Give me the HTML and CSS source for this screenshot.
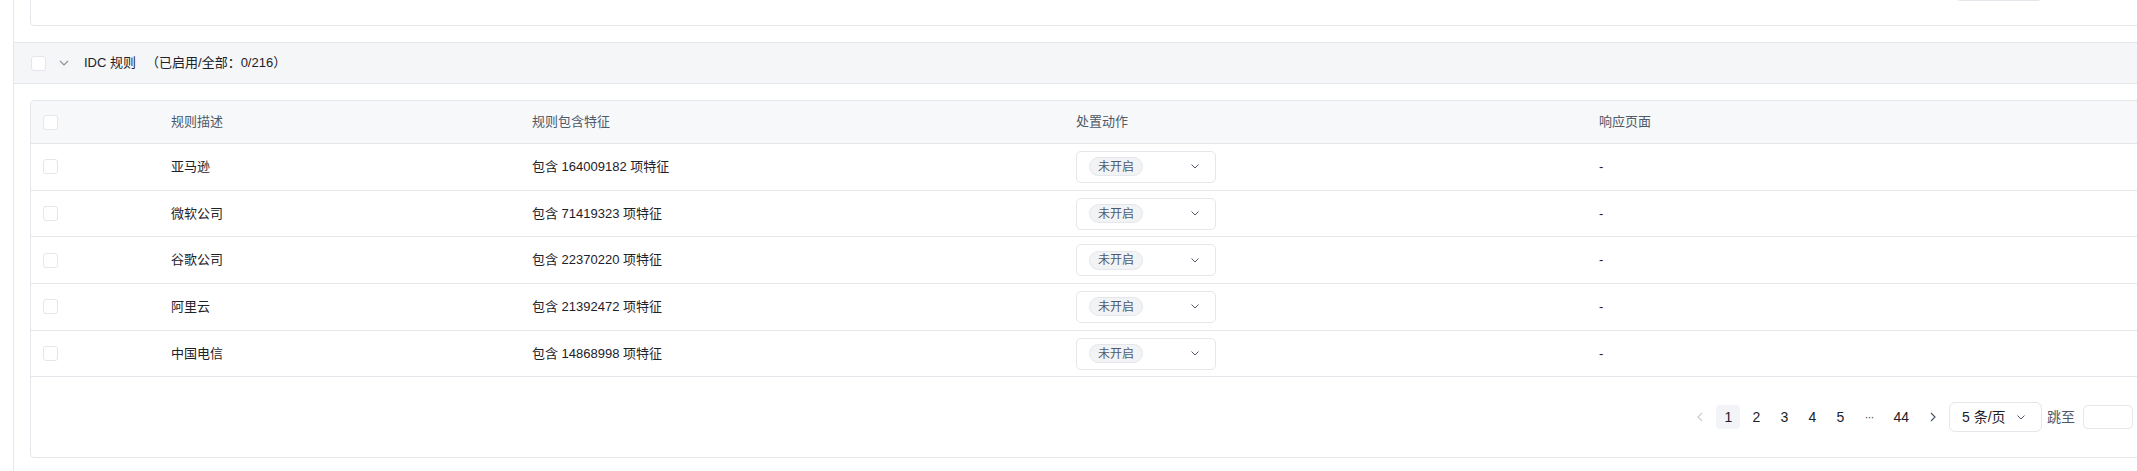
FILE: index.html
```html
<!DOCTYPE html>
<html lang="zh-CN">
<head>
    <meta charset="UTF-8">
    <meta name="viewport" content="width=device-width, initial-scale=1.0">
    <title>IDC 规则</title>
    <link rel="stylesheet" href="styles.css">
</head>
<body>
    <div class="layout">
        <div class="gutter"></div>

        <div class="panel">
            <div class="card top-card">
                <div class="toolbar">
                    <div class="btn"></div>
                </div>
            </div>

            <div class="group-header">
                <span class="checkbox"></span>
                <svg class="group-arrow" width="10" height="6" viewBox="0 0 10 6">
                    <polyline points="1,1 5,5 9,1" fill="none" stroke="#86909c" stroke-width="1.1"/>
                </svg>
                <span class="group-title">IDC 规则</span>
                <span class="group-count">（已启用/全部：0/216）</span>
            </div>

            <div class="card table-card">
                <div class="row head">
                    <div class="cell check"><span class="checkbox"></span></div>
                    <div class="cell">规则描述</div>
                    <div class="cell">规则包含特征</div>
                    <div class="cell">处置动作</div>
                    <div class="cell">响应页面</div>
                </div>

                <div class="row">
                    <div class="cell check"><span class="checkbox"></span></div>
                    <div class="cell">亚马逊</div>
                    <div class="cell">包含 164009182 项特征</div>
                    <div class="cell">
                        <div class="select">
                            <span class="tag">未开启</span>
                            <svg width="8" height="5" viewBox="0 0 8 5"><polyline points="0.5,0.5 4,4 7.5,0.5" fill="none" stroke="#4e5969" stroke-width="1"/></svg>
                        </div>
                    </div>
                    <div class="cell">-</div>
                </div>

                <div class="row">
                    <div class="cell check"><span class="checkbox"></span></div>
                    <div class="cell">微软公司</div>
                    <div class="cell">包含 71419323 项特征</div>
                    <div class="cell">
                        <div class="select">
                            <span class="tag">未开启</span>
                            <svg width="8" height="5" viewBox="0 0 8 5"><polyline points="0.5,0.5 4,4 7.5,0.5" fill="none" stroke="#4e5969" stroke-width="1"/></svg>
                        </div>
                    </div>
                    <div class="cell">-</div>
                </div>

                <div class="row">
                    <div class="cell check"><span class="checkbox"></span></div>
                    <div class="cell">谷歌公司</div>
                    <div class="cell">包含 22370220 项特征</div>
                    <div class="cell">
                        <div class="select">
                            <span class="tag">未开启</span>
                            <svg width="8" height="5" viewBox="0 0 8 5"><polyline points="0.5,0.5 4,4 7.5,0.5" fill="none" stroke="#4e5969" stroke-width="1"/></svg>
                        </div>
                    </div>
                    <div class="cell">-</div>
                </div>

                <div class="row">
                    <div class="cell check"><span class="checkbox"></span></div>
                    <div class="cell">阿里云</div>
                    <div class="cell">包含 21392472 项特征</div>
                    <div class="cell">
                        <div class="select">
                            <span class="tag">未开启</span>
                            <svg width="8" height="5" viewBox="0 0 8 5"><polyline points="0.5,0.5 4,4 7.5,0.5" fill="none" stroke="#4e5969" stroke-width="1"/></svg>
                        </div>
                    </div>
                    <div class="cell">-</div>
                </div>

                <div class="row">
                    <div class="cell check"><span class="checkbox"></span></div>
                    <div class="cell">中国电信</div>
                    <div class="cell">包含 14868998 项特征</div>
                    <div class="cell">
                        <div class="select">
                            <span class="tag">未开启</span>
                            <svg width="8" height="5" viewBox="0 0 8 5"><polyline points="0.5,0.5 4,4 7.5,0.5" fill="none" stroke="#4e5969" stroke-width="1"/></svg>
                        </div>
                    </div>
                    <div class="cell">-</div>
                </div>

                <div class="pagination">
                    <span class="page-item arrow disabled">
                        <svg width="6" height="10" viewBox="0 0 6 10"><polyline points="5,1 1,5 5,9" fill="none" stroke="#c9cdd4" stroke-width="1.2"/></svg>
                    </span>
                    <span class="page-item active">1</span>
                    <span class="page-item">2</span>
                    <span class="page-item">3</span>
                    <span class="page-item">4</span>
                    <span class="page-item">5</span>
                    <span class="page-item more">···</span>
                    <span class="page-item">44</span>
                    <span class="page-item arrow">
                        <svg width="6" height="10" viewBox="0 0 6 10"><polyline points="1,1 5,5 1,9" fill="none" stroke="#4e5969" stroke-width="1.2"/></svg>
                    </span>
                    <div class="page-size">
                        <span>5 条/页</span>
                        <svg width="8" height="5" viewBox="0 0 8 5"><polyline points="0.5,0.5 4,4 7.5,0.5" fill="none" stroke="#4e5969" stroke-width="1"/></svg>
                    </div>
                    <span class="jump-label">跳至</span>
                    <span class="jump-input"></span>
                </div>
            </div>
        </div>
    </div>
</body>
</html>
```

FILE: styles.css
```css
* {
    margin: 0;
    padding: 0;
    box-sizing: border-box;
}

html, body {
    overflow: hidden;
}

body {
    font-family: 'Liberation Sans', 'Noto Sans CJK SC', sans-serif;
    font-size: 13px;
    line-height: 20px;
    color: #1d2129;
    background: #ffffff;
}

.layout {
    display: flex;
    width: 2166px;
}

.gutter {
    width: 13px;
    flex-shrink: 0;
}

.panel {
    flex: 1;
    min-height: 100vh;
    border-left: 1px solid #e5e6eb;
}

.card {
    border: 1px solid #e5e6eb;
    border-radius: 4px;
    margin: 0 16px;
    background: #ffffff;
}

/* card above is scrolled mostly out of view */
.top-card {
    margin-top: -48px;
    padding: 16px 16px 24px;
}

.toolbar {
    display: flex;
    justify-content: flex-end;
}

.btn {
    width: 86px;
    height: 32px;
    border: 1px solid #e5e6eb;
    border-radius: 4px;
    margin-right: 91px;
}

.group-header {
    display: flex;
    align-items: center;
    height: 42px;
    margin-top: 16px;
    padding-left: 17px;
    background: #f5f6f8;
    border-top: 1px solid #e5e6eb;
    border-bottom: 1px solid #e5e6eb;
}

.checkbox {
    display: inline-block;
    width: 15px;
    height: 15px;
    border: 1px solid #e5e6eb;
    border-radius: 3px;
    background: #ffffff;
}

.group-arrow {
    margin-left: 13px;
    margin-right: 15px;
}

.group-count {
    margin-left: 10px;
}

.table-card {
    margin-top: 16px;
    overflow: hidden;
}

.row {
    display: grid;
    grid-template-columns: 124px 361px 544px 523px 1fr;
    height: 46.7px;
    border-bottom: 1px solid #e5e6eb;
}

.row.head {
    height: 43px;
    background: #f7f8fa;
    color: #4e5969;
}

.cell {
    display: flex;
    align-items: center;
    padding: 0 16px;
}

.cell.check {
    padding-left: 12px;
}

.select {
    display: flex;
    align-items: center;
    justify-content: space-between;
    width: 140px;
    height: 32px;
    padding: 0 16px 0 12px;
    border: 1px solid #e5e6eb;
    border-radius: 5px;
}

.tag {
    display: inline-flex;
    align-items: center;
    height: 19px;
    padding: 0 8px;
    font-size: 12px;
    color: #4e5969;
    background: #f2f3f5;
    border: 1px solid #e5e6eb;
    border-radius: 10px;
}

.pagination {
    display: flex;
    align-items: center;
    justify-content: flex-end;
    gap: 4px;
    height: 80px;
    padding-right: 16px;
    font-size: 14px;
}

.page-item {
    display: flex;
    align-items: center;
    justify-content: center;
    min-width: 24px;
    height: 24px;
    padding: 0 8px;
    border-radius: 4px;
    color: #1d2129;
}

.page-item.active {
    background: #f2f4f8;
}

.page-item.more {
    font-size: 12px;
    letter-spacing: -1px;
    color: #4e5969;
}

.page-size {
    display: flex;
    align-items: center;
    justify-content: space-between;
    width: 93px;
    height: 30px;
    padding: 0 16px 0 12px;
    border: 1px solid #e5e6eb;
    border-radius: 6px;
}

.jump-label {
    margin-left: 1px;
    color: #4e5969;
}

.jump-input {
    width: 50px;
    height: 24px;
    margin-left: 4px;
    border: 1px solid #e5e6eb;
    border-radius: 5px;
}
```
